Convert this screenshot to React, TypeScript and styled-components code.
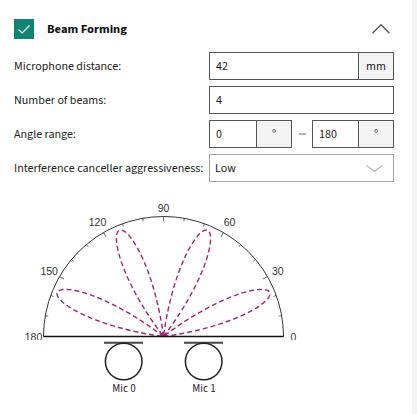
import React from "react";
import styled, { createGlobalStyle } from "styled-components";

const GlobalStyle = createGlobalStyle`
  html, body { margin: 0; padding: 0; background: #ffffff; }
  body { font-family: "Source Sans Pro", "Source Sans 3", Roboto, "Liberation Sans", sans-serif; color: #222; }
  * { box-sizing: border-box; }
`;

const Page = styled.div`
  display: flex;
  min-height: 414px;
  width: 417px;
`;

const Panel = styled.section`
  flex: 0 0 412px;
  padding: 19px 18px 0 14px;
`;

const ScrollTrack = styled.div`
  flex: 1;
  background: #f4f4f4;
`;

const Header = styled.header`
  display: flex;
  align-items: center;
  height: 20px;
`;

const Checkbox = styled.span`
  width: 20px;
  height: 20px;
  background: #0f8475;
  display: flex;
  align-items: center;
  justify-content: center;
  flex: none;
`;

const Title = styled.h2`
  margin: 0 0 0 13px;
  font-size: 12.5px;
  font-weight: 700;
  color: #111;
  line-height: 20px;
`;

const CollapseButton = styled.button`
  margin-left: auto;
  margin-right: 4px;
  padding: 0;
  border: 0;
  background: none;
  display: flex;
  align-items: center;
`;

const Form = styled.div`
  display: grid;
  grid-template-columns: 195px 185px;
  row-gap: 6px;
  margin-top: 13px;
  align-items: center;
`;

const Label = styled.label`
  font-size: 12px;
  color: #222;
  white-space: nowrap;
`;

const Field = styled.div<{ $width?: number; $muted?: boolean }>`
  display: flex;
  height: 28px;
  width: ${(p) => (p.$width ? `${p.$width}px` : "100%")};
  border: 1px solid ${(p) => (p.$muted ? "#a3a3a3" : "#555")};
  background: #fff;
`;

const FieldInput = styled.input`
  flex: 1;
  min-width: 0;
  border: 0;
  outline: none;
  padding: 0 6px;
  font: inherit;
  font-size: 12px;
  color: #1c1c24;
  background: transparent;
`;

const Addon = styled.span`
  flex: none;
  width: 35px;
  border-left: 1px solid #555;
  background: #f3f3f3;
  display: flex;
  align-items: center;
  justify-content: center;
  font-size: 12px;
  color: #1c1c24;
`;

const RangeGroup = styled.div`
  display: flex;
  align-items: center;
`;

const RangeDash = styled.span`
  width: 20px;
  display: flex;
  justify-content: center;
  &::before {
    content: "";
    width: 7px;
    height: 1.5px;
    background: #b0b0b0;
  }
`;

const SelectValue = styled.span`
  flex: 1;
  display: flex;
  align-items: center;
  padding: 0 5px;
  font-size: 12px;
  color: #1c1c24;
`;

const SelectArrow = styled.span`
  display: flex;
  align-items: center;
  padding-right: 10px;
`;

const Chart = styled.svg`
  display: block;
  margin-top: 13px;
  overflow: hidden;
`;

const MicRow = styled.div`
  display: flex;
  gap: 40px;
  padding-left: 90px;
`;

const Mic = styled.figure`
  margin: 0;
  width: 40px;
  display: flex;
  flex-direction: column;
  align-items: center;
`;

const MicLabel = styled.figcaption`
  margin-top: 1px;
  font-size: 11px;
  line-height: 14px;
  color: #1c1c2c;
  white-space: nowrap;
`;

const CX = 149.5;
const CY = 141.5;
const R = 120;

const rad = (d: number) => (d * Math.PI) / 180;

function lobePath(center: number): string {
  const pts: string[] = [];
  const k = 6;
  const len = 115;
  for (let d = -15; d <= 15.001; d += 0.5) {
    const r = len * Math.max(0, Math.cos(rad(k * d)));
    const a = rad(center + d);
    const x = CX + r * Math.cos(a);
    const y = CY - r * Math.sin(a);
    pts.push(`${x.toFixed(2)},${y.toFixed(2)}`);
  }
  return "M" + pts.join(" L") + " Z";
}

const ticks = Array.from({ length: 19 }, (_, i) => i * 10);
const labels = [0, 30, 60, 90, 120, 150, 180];
const beams = [22.5, 67.5, 112.5, 157.5];

function PolarChart() {
  return (
    <Chart width={380} height={145} viewBox="0 0 380 145">
      <path
        d={`M${CX - R},${CY} A${R},${R} 0 0 1 ${CX + R},${CY}`}
        fill="none"
        stroke="#333"
        strokeWidth={1}
      />
      {ticks.map((t) => {
        const major = t % 30 === 0;
        const inner = R - (major ? 5 : 3);
        const a = rad(t);
        return (
          <line
            key={t}
            x1={CX + R * Math.cos(a)}
            y1={CY - R * Math.sin(a)}
            x2={CX + inner * Math.cos(a)}
            y2={CY - inner * Math.sin(a)}
            stroke="#444"
            strokeWidth={0.8}
          />
        );
      })}
      {labels.map((l) => {
        const a = rad(l);
        const lr = l === 90 ? 128.5 : l === 0 || l === 180 ? 130 : 132;
        return (
          <text
            key={l}
            x={CX + lr * Math.cos(a)}
            y={CY - lr * Math.sin(a)}
            textAnchor="middle"
            dominantBaseline="central"
            fontFamily="'Liberation Sans', Arial, sans-serif"
            fontSize={10.5}
            fill="#333"
          >
            {l}
          </text>
        );
      })}
      {beams.map((b) => (
        <path
          key={b}
          d={lobePath(b)}
          fill="none"
          stroke="#a3236f"
          strokeWidth={1.4}
          strokeDasharray="5 3"
        />
      ))}
      <line x1={CX - R} y1={CY} x2={CX + R} y2={CY} stroke="#111" strokeWidth={1.4} />
    </Chart>
  );
}

function MicIcon() {
  return (
    <svg width={40} height={41} viewBox="0 0 40 41">
      <line x1={0} y1={2.7} x2={39} y2={2.7} stroke="#444" strokeWidth={2} />
      <circle cx={19.7} cy={21.5} r={18.3} fill="none" stroke="#222" strokeWidth={1.5} />
    </svg>
  );
}

export default function App() {
  return (
    <>
      <GlobalStyle />
      <Page>
        <Panel>
          <Header>
            <Checkbox>
              <svg width={20} height={20} viewBox="0 0 20 20">
                <path d="M4.5 10.5 L8.2 14 L15.5 6.5" fill="none" stroke="#fff" strokeWidth={1.2} />
              </svg>
            </Checkbox>
            <Title>Beam Forming</Title>
            <CollapseButton aria-label="Collapse">
              <svg width={18} height={10} viewBox="0 0 18 10">
                <polyline points="0.5,9.2 9,0.8 17.5,9.2" fill="none" stroke="#555" strokeWidth={1.4} />
              </svg>
            </CollapseButton>
          </Header>

          <Form>
            <Label>Microphone distance:</Label>
            <Field>
              <FieldInput readOnly value="42" />
              <Addon>mm</Addon>
            </Field>

            <Label>Number of beams:</Label>
            <Field>
              <FieldInput readOnly value="4" />
            </Field>

            <Label>Angle range:</Label>
            <RangeGroup>
              <Field $width={83}>
                <FieldInput readOnly value="0" />
                <Addon>°</Addon>
              </Field>
              <RangeDash />
              <Field $width={82}>
                <FieldInput readOnly value="180" />
                <Addon>°</Addon>
              </Field>
            </RangeGroup>

            <Label>Interference canceller aggressiveness:</Label>
            <Field $muted>
              <SelectValue>Low</SelectValue>
              <SelectArrow>
                <svg width={17} height={7} viewBox="0 0 17 7">
                  <polyline points="0.5,0.5 8.5,6.2 16.5,0.5" fill="none" stroke="#b5b5b5" strokeWidth={1.1} />
                </svg>
              </SelectArrow>
            </Field>
          </Form>

          <PolarChart />

          <MicRow>
            <Mic>
              <MicIcon />
              <MicLabel>Mic 0</MicLabel>
            </Mic>
            <Mic>
              <MicIcon />
              <MicLabel>Mic 1</MicLabel>
            </Mic>
          </MicRow>
        </Panel>
        <ScrollTrack />
      </Page>
    </>
  );
}
